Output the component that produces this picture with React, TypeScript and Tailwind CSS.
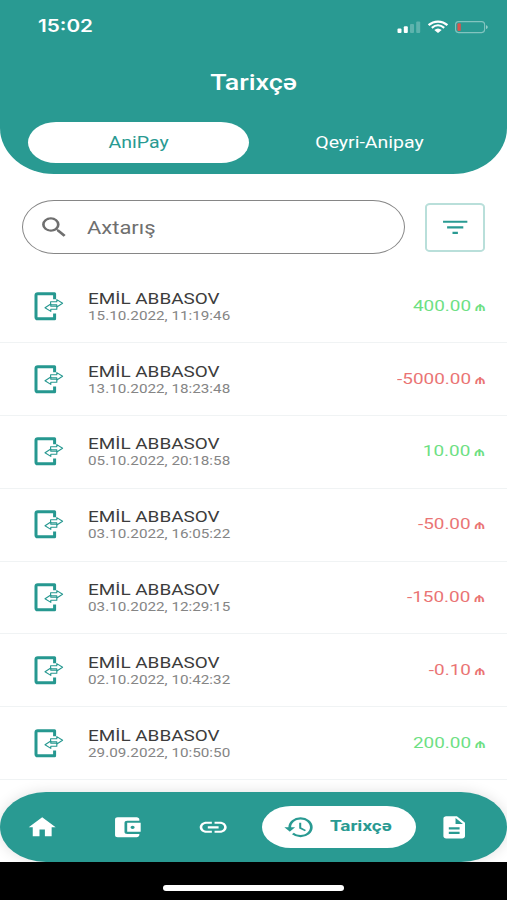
import type { ReactNode } from 'react'
import { MdAccountBalanceWallet, MdDescription, MdFilterList, MdHistory, MdHome, MdLink, MdSearch } from 'react-icons/md'

const TRANSACTIONS = [
  { id: 1, name: 'EMİL ABBASOV', date: '15.10.2022, 11:19:46', amount: '400.00' },
  { id: 2, name: 'EMİL ABBASOV', date: '13.10.2022, 18:23:48', amount: '-5000.00' },
  { id: 3, name: 'EMİL ABBASOV', date: '05.10.2022, 20:18:58', amount: '10.00' },
  { id: 4, name: 'EMİL ABBASOV', date: '03.10.2022, 16:05:22', amount: '-50.00' },
  { id: 5, name: 'EMİL ABBASOV', date: '03.10.2022, 12:29:15', amount: '-150.00' },
  { id: 6, name: 'EMİL ABBASOV', date: '02.10.2022, 10:42:32', amount: '-0.10' },
  { id: 7, name: 'EMİL ABBASOV', date: '29.09.2022, 10:50:50', amount: '200.00' },
]

const ICON = 'w-[32.4px] h-[26.6px] shrink-0'

function Wide({ className = '', children }: { className?: string, children: ReactNode }) {
  return <span className={`block whitespace-nowrap scale-x-[1.22] ${className}`}>{children}</span>
}

function StatusIcons() {
  return (
    <svg width="92" height="16" viewBox="0 0 92 16" fill="none">
      <rect x="0.5" y="9.5" width="4" height="4.5" rx="1" fill="#fff" />
      <rect x="6.8" y="7.3" width="4" height="6.7" rx="1" fill="#fff" />
      <rect x="13" y="5" width="4" height="9" rx="1" fill="#fff" opacity="0.25" />
      <rect x="19.2" y="2.5" width="4" height="11.5" rx="1" fill="#fff" opacity="0.25" />
      <path d="M31.6 6.2C37 1.3 45 1.3 50.4 6.2" stroke="#fff" strokeWidth="2.3" />
      <path d="M34.8 8.9C38.7 5.6 43.3 5.6 47.2 8.9" stroke="#fff" strokeWidth="2.1" />
      <path d="M37.3 11C39.6 9 42.4 9 44.7 11L41 14Z" fill="#fff" />
      <rect x="58.6" y="2.6" width="29" height="11" rx="3" stroke="#fff" strokeOpacity="0.42" strokeWidth="1.1" />
      <rect x="60.4" y="4.3" width="3.4" height="7.8" rx="1" fill="#d9544d" />
      <path d="M89 6.2C91.3 6.6 91.3 9.6 89 10Z" fill="#fff" opacity="0.5" />
    </svg>
  )
}

function TransferIcon() {
  return (
    <svg className="shrink-0" width="31" height="29" viewBox="0 0 31 29" fill="none" stroke="#269890">
      <path d="M20.6 7.2V1.8H3.8Q2 1.8 2 3.3V25.2Q2 26.8 3.8 26.8H20.6V21.5" strokeWidth="3" strokeLinejoin="round" />
      <path d="M16.6 9.8H22.8V7.6L28.6 11.3L22.8 15V12.9H16.6Z" strokeWidth="1.1" strokeLinejoin="round" />
      <path d="M22.8 14.2H16.8V12L11 15.7L16.8 19.4V17.2H22.8Z" fill="#fff" strokeWidth="1.1" strokeLinejoin="round" />
    </svg>
  )
}

function Manat() {
  return <span className="ml-[3px] text-[13px] font-medium">₼</span>
}

export default function App() {
  return (
    <div className="flex h-[900px] w-[507px] flex-col overflow-hidden bg-white font-['Roboto',sans-serif]">
      <header className="h-[173.5px] shrink-0 rounded-b-[54px_46px] bg-[#299a92] text-white">
        <div className="flex h-[53px] items-center justify-between pl-[38px] pr-[18px]">
          <Wide className="origin-left font-['Inter',sans-serif] text-[17px] font-semibold">15:02</Wide>
          <StatusIcons />
        </div>
        <div className="flex h-[69px] items-center justify-center pb-[11px]">
          <Wide className="text-[22px] font-medium">Tarixçə</Wide>
        </div>
        <div className="flex px-[28px]">
          <button className="flex h-[41px] w-[221px] items-center justify-center rounded-[28px/20.5px] bg-white text-[#299a92]">
            <Wide className="text-[16px]">AniPay</Wide>
          </button>
          <button className="flex h-[41px] flex-1 items-center justify-center pl-[11px]">
            <Wide className="text-[16px]">Qeyri-Anipay</Wide>
          </button>
        </div>
      </header>

      <div className="flex h-[97px] shrink-0 items-center justify-between pl-[22px] pr-[22px] pb-[-10px] pt-[10px]">
        <div className="flex h-[54px] w-[383px] items-center rounded-[32px/27px] border-[1.5px] border-[#868686] pl-[15px] text-[#6f6f6f]">
          <MdSearch preserveAspectRatio="none" className={ICON} />
          <Wide className="ml-[17px] origin-left text-[18px]">Axtarış</Wide>
        </div>
        <button className="flex h-[49px] w-[60px] items-center justify-center rounded-[5px/4px] border-2 border-[#b9dfda] text-[#299a92]">
          <MdFilterList preserveAspectRatio="none" className={ICON} />
        </button>
      </div>

      <main className="min-h-0 flex-1">
        {TRANSACTIONS.map(t => (
          <div key={t.id} className="flex h-[72.8px] items-center border-b-[1.5px] border-[#f0f3f4] pl-[34px] pr-[22px]">
            <TransferIcon />
            <div className="ml-[23px] flex-1">
              <Wide className="origin-left text-[15.5px] leading-[18px] text-[#3c3c3c]">{t.name}</Wide>
              <Wide className="origin-left text-[12.5px] leading-[15px] text-[#858585]">{t.date}</Wide>
            </div>
            <Wide className={`origin-right text-[15.5px] ${t.amount.startsWith('-') ? 'text-[#ea7474]' : 'text-[#6de083]'}`}>
              {t.amount}
              <Manat />
            </Wide>
          </div>
        ))}
      </main>

      <nav className="flex h-[70px] shrink-0 items-center rounded-[46px/35px] bg-[#299a92] text-white shadow-[0_0_14px_rgba(0,0,0,0.12)]">
        <MdHome preserveAspectRatio="none" className={`${ICON} ml-[26px]`} />
        <MdAccountBalanceWallet preserveAspectRatio="none" className={`${ICON} ml-[53px]`} />
        <MdLink preserveAspectRatio="none" className={`${ICON} ml-[53px]`} />
        <button className="ml-[33px] flex h-[42px] w-[154px] items-center rounded-[29px/21px] bg-white pl-[21px] text-[#299a92]">
          <MdHistory preserveAspectRatio="none" className={ICON} />
          <Wide className="ml-[14px] origin-left text-[15.5px] font-bold">Tarixçə</Wide>
        </button>
        <MdDescription preserveAspectRatio="none" className={`${ICON} ml-[22px]`} />
      </nav>

      <div className="z-10 flex h-[38px] shrink-0 justify-center bg-black pt-[23px]">
        <div className="h-[6px] w-[181px] rounded-full bg-white" />
      </div>
    </div>
  )
}
